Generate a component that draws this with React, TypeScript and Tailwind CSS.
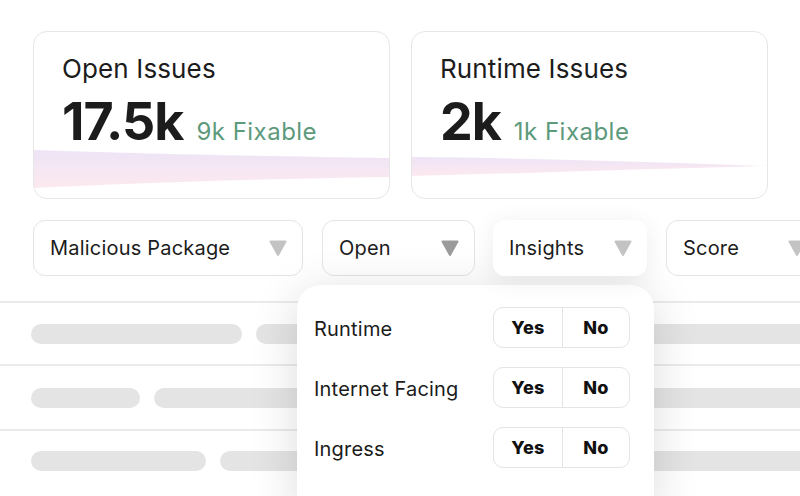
import React from 'react';

const font = { fontFamily: 'Inter, "Noto Sans", sans-serif' };

const Caret = ({ dark = false }: { dark?: boolean }) => (
  <svg width="18" height="16" viewBox="0 0 18 16" aria-hidden="true">
    <path
      d="M1.5 1.5 H16.5 L9 15 Z"
      fill={dark ? '#9b9b9b' : '#c3c3c3'}
      stroke={dark ? '#9b9b9b' : '#c3c3c3'}
      strokeWidth="2"
      strokeLinejoin="round"
    />
  </svg>
);

const StatCard = ({
  title,
  value,
  fixable,
  band
}: {
  title: string;
  value: string;
  fixable: string;
  band: 'wide' | 'tip';
}) => (
  <div className="flex h-[168px] w-[357px] shrink-0 flex-col overflow-hidden rounded-[14px] border-[1.5px] border-[#e6e6e6] bg-white">
    <div className="pl-[28px] pt-[21px]">
      <p className="text-[26px] leading-[32px] tracking-[0.005em] text-[#1c1c1c]">{title}</p>
      <div className="mt-[11px] flex items-baseline gap-[13px]">
        <span className="text-[52px] font-bold leading-[52px] tracking-[-0.02em] text-[#1c1c1c]">{value}</span>
        <span className="text-[24px] leading-[28px] tracking-[0.02em] text-[#5d9a7c]">{fixable}</span>
      </div>
    </div>
    <svg className="-mt-[1px] block h-[44px] w-full" viewBox="0 0 357 44" preserveAspectRatio="none">
      <defs>
        <linearGradient id={`g-${band}`} x1="0" y1="0" x2="0" y2="1">
          <stop offset="0" stopColor="#ede4f6" />
          <stop offset="1" stopColor="#fde9ef" />
        </linearGradient>
      </defs>
      {band === 'wide' ? (
        <path d="M0 3 C 90 6, 200 9, 357 11 L357 30 C 220 32, 100 36, 0 41 Z" fill={`url(#g-${band})`} />
      ) : (
        <path d="M0 10 C 120 11, 240 15, 357 19 C 240 22, 120 26, 0 29 Z" fill={`url(#g-${band})`} />
      )}
    </svg>
  </div>
);

const Filter = ({
  label,
  width,
  dark = false,
  active = false
}: {
  label: string;
  width: string;
  dark?: boolean;
  active?: boolean;
}) => (
  <div
    className={`flex h-[56px] shrink-0 items-center justify-between rounded-[12px] bg-white pl-[16px] pr-[15px] ${width} ${
      active
        ? 'relative z-20 shadow-[0_4px_24px_rgba(0,0,0,0.08)]'
        : 'border-[1.5px] border-[#e4e4e4]'
    }`}
  >
    <span className="text-[20px] leading-none tracking-[0.01em] text-[#1c1c1c]">{label}</span>
    <Caret dark={dark} />
  </div>
);

const rows = [
  { first: 'w-[211px]', gap: 'mt-[21px] mb-[20px]' },
  { first: 'w-[109px]', gap: 'mt-[22px] mb-[21px]' },
  { first: 'w-[175px]', gap: 'mt-[20px] mb-[30px]' }
];

const toggles = ['Runtime', 'Internet Facing', 'Ingress'];

export default function App() {
  return (
    <div className="relative h-[496px] w-[800px] overflow-hidden bg-white" style={font}>
      <div className="flex gap-[21px] pl-[33px] pt-[31px]">
        <StatCard title="Open Issues" value="17.5k" fixable="9k Fixable" band="wide" />
        <StatCard title="Runtime Issues" value="2k" fixable="1k Fixable" band="tip" />
      </div>

      <div className="mt-[21px] flex pl-[33px]">
        <Filter label="Malicious Package" width="w-[270px]" />
        <div className="w-[19px] shrink-0" />
        <Filter label="Open" width="w-[153px]" dark />
        <div className="w-[18px] shrink-0" />
        <Filter label="Insights" width="w-[154px]" active />
        <div className="w-[19px] shrink-0" />
        <Filter label="Score" width="w-[156px]" />
      </div>

      <div className="mt-[25px]">
        {rows.map((r, i) => (
          <div key={i}>
            <div className="h-[2px] bg-[#ebebeb]" />
            <div className={`flex gap-[14px] pl-[31px] ${r.gap}`}>
              <div className={`h-[20px] rounded-full bg-[#e4e4e4] ${r.first}`} />
              <div className="h-[20px] flex-1 rounded-l-full bg-[#e4e4e4]" />
            </div>
          </div>
        ))}
      </div>

      {/* insights dropdown */}
      <div className="absolute left-[297px] top-[285px] z-10 w-[357px] rounded-t-[24px] bg-white pb-[40px] pl-[17px] pr-[24px] pt-[22px] shadow-[0_8px_48px_rgba(0,0,0,0.14)]">
        <div className="flex flex-col gap-[19px]">
          {toggles.map((t) => (
            <div key={t} className="flex h-[41px] items-center justify-between">
              <span className="pt-[3px] text-[20px] tracking-[0.01em] text-[#1c1c1c]">{t}</span>
              <div className="flex h-[41px] w-[137px] overflow-hidden rounded-[10px] border-[1.5px] border-[#e4e4e4]">
                <div className="flex w-[69px] items-center justify-center border-r-[1.5px] border-[#e4e4e4] text-[18px] font-extrabold tracking-[0.02em] text-[#111]">
                  Yes
                </div>
                <div className="flex flex-1 items-center justify-center text-[18px] font-extrabold tracking-[0.02em] text-[#111]">
                  No
                </div>
              </div>
            </div>
          ))}
        </div>
      </div>
    </div>
  );
}
